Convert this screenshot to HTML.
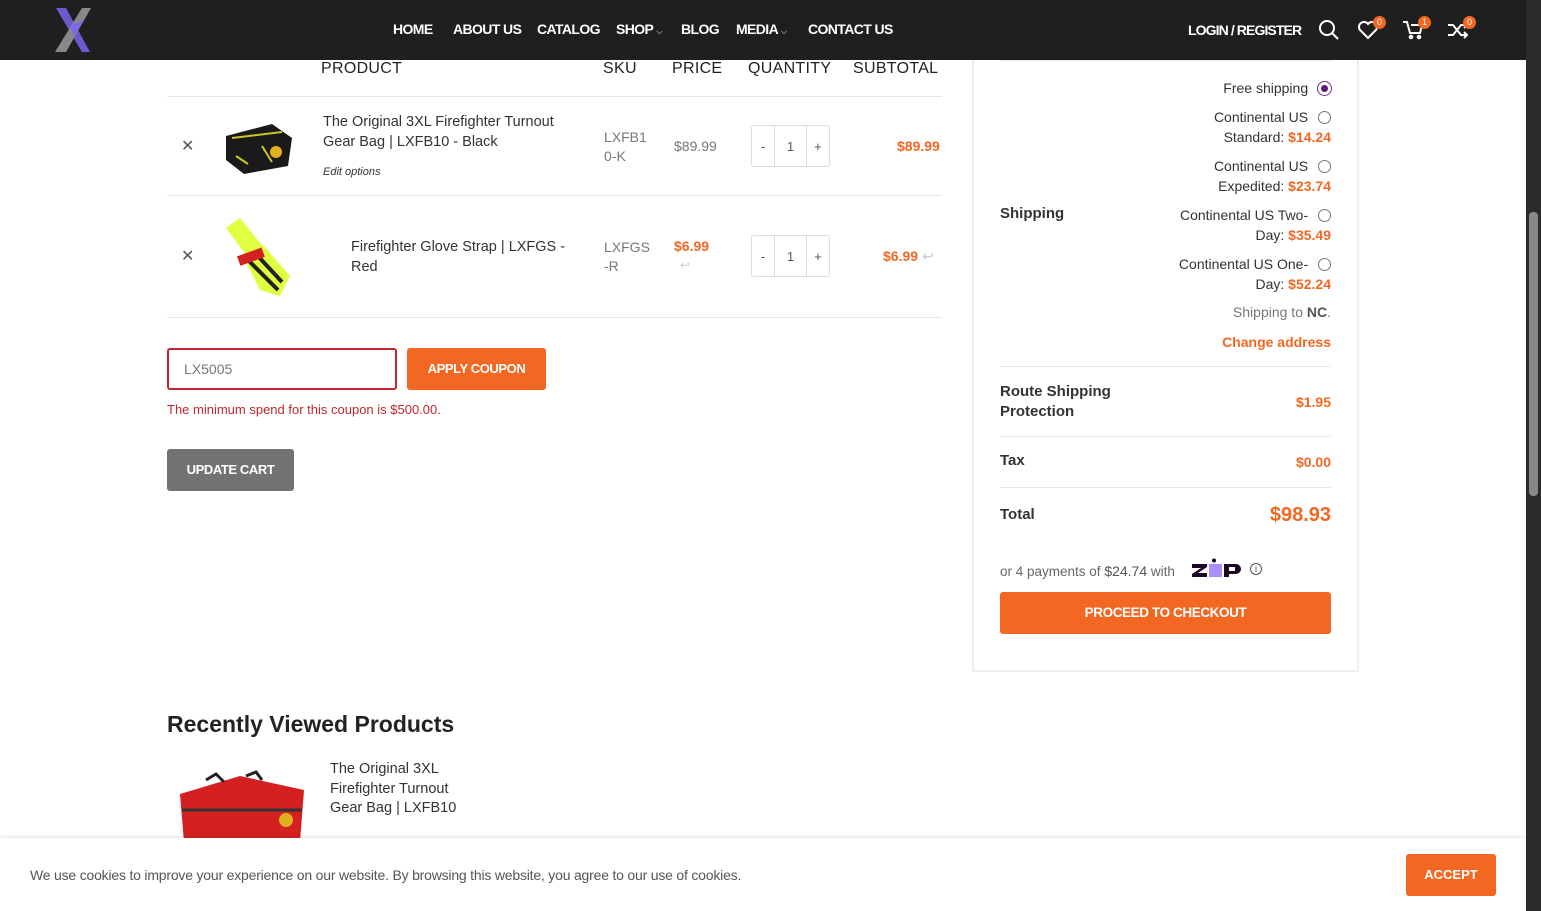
<!DOCTYPE html>
<html><head><meta charset="utf-8"><style>
*{box-sizing:border-box;margin:0;padding:0}
body{width:1541px;height:911px;overflow:hidden;background:#fff;font-family:"Liberation Sans",sans-serif;color:#333;position:relative}
.a{position:absolute}
.hdr{left:0;top:0;width:1526px;height:60px;background:#1f1f1f}
.nav{color:#fff;font-weight:bold;font-size:14px;top:21px;letter-spacing:-0.6px}
.or{color:#f26722}
.th{font-size:16px;color:#222;top:60px;letter-spacing:.3px}
.line{height:1px;background:#e6e6e6}
.t14{font-size:14px}
.qty{width:79px;height:42px;border:1px solid #ddd;border-radius:3px;display:flex;font-size:13px;color:#555}
.qty span{flex:1;display:flex;align-items:center;justify-content:center}
.qty span:nth-child(2){border-left:1px solid #ddd;border-right:1px solid #ddd;flex:1.4}
.r{text-align:right}
.radio{display:inline-block;width:13px;height:13px;border:1px solid #777;border-radius:50%;vertical-align:-2px;margin-left:6px}
.badge{width:13px;height:13px;border-radius:50%;background:#f26722;color:#fff;font-size:9px;text-align:center;line-height:13px}
</style></head><body>
<div class="a hdr"></div>
<svg class="a" style="left:52px;top:6px" width="42" height="48" viewBox="0 0 42 48"><path d="M4 2h10l24 44h-8z" fill="#6a5acd"/><path d="M30 2h9L14 46H3z" fill="#888"/><path d="M18 20l14-6-10 16z" fill="#7b68ee"/></svg>
<div class="a nav" style="left:393px">HOME</div>
<div class="a nav" style="left:453px">ABOUT US</div>
<div class="a nav" style="left:537px">CATALOG</div>
<div class="a nav" style="left:616px">SHOP <span style="font-size:8px;color:#999">⌵</span></div>
<div class="a nav" style="left:681px">BLOG</div>
<div class="a nav" style="left:736px">MEDIA <span style="font-size:8px;color:#999">⌵</span></div>
<div class="a nav" style="left:808px">CONTACT US</div>
<div class="a nav" style="left:1188px;top:22px;letter-spacing:-0.9px">LOGIN / REGISTER</div>
<svg class="a" style="left:1318px;top:19px" width="22" height="22" viewBox="0 0 22 22" fill="none" stroke="#fff" stroke-width="2"><circle cx="9" cy="9" r="7"/><path d="M14 14l6 6"/></svg>
<svg class="a" style="left:1357px;top:20px" width="22" height="20" viewBox="0 0 22 20" fill="none" stroke="#fff" stroke-width="2"><path d="M11 18L3 10a4.5 4.5 0 0 1 8-6a4.5 4.5 0 0 1 8 6z"/></svg>
<div class="a badge" style="left:1373px;top:16px">0</div>
<svg class="a" style="left:1402px;top:20px" width="22" height="20" viewBox="0 0 22 20" fill="none" stroke="#fff" stroke-width="2"><path d="M1 2h4l3 11h10l2-8H9"/><circle cx="9" cy="17" r="1.3"/><circle cx="17" cy="17" r="1.3"/></svg>
<div class="a badge" style="left:1418px;top:16px">1</div>
<svg class="a" style="left:1447px;top:21px" width="22" height="18" viewBox="0 0 22 18" fill="none" stroke="#fff" stroke-width="2"><path d="M1 4h5l8 10h6M1 14h5l8-10h6M17 1l3 3-3 3M17 11l3 3-3 3"/></svg>
<div class="a badge" style="left:1463px;top:16px">0</div>
<div class="a" style="left:1526px;top:0;width:15px;height:911px;background:#2b2b2b"></div>
<div class="a" style="left:1529px;top:212px;width:9px;height:284px;background:#888;border-radius:4px"></div>

<div class="a th" style="left:321px">PRODUCT</div>
<div class="a th" style="left:603px">SKU</div>
<div class="a th" style="left:672px">PRICE</div>
<div class="a th" style="left:748px">QUANTITY</div>
<div class="a th" style="left:853px">SUBTOTAL</div>
<div class="a line" style="left:167px;top:96px;width:775px"></div>
<div class="a" style="left:181px;top:136px;font-size:16px;color:#555">✕</div>
<svg class="a" style="left:222px;top:116px" width="74" height="60" viewBox="0 0 74 60"><path d="M4 20l46-12 20 14-4 28-44 8-18-14z" fill="#1a1a1a"/><path d="M10 22l50-6M14 40l12 8M40 30l10 16" stroke="#c8c820" stroke-width="2"/><circle cx="54" cy="36" r="6" fill="#e0b020"/></svg>
<div class="a t14" style="left:323px;top:112px;line-height:20px;color:#333;width:260px;font-size:14.5px">The Original 3XL Firefighter Turnout Gear Bag | LXFB10 - Black</div>
<div class="a" style="left:323px;top:166px;font-size:11px;font-style:italic">Edit options</div>
<div class="a t14" style="left:604px;top:128px;line-height:19px;color:#777">LXFB1<br>0-K</div>
<div class="a t14" style="left:674px;top:138px;color:#777">$89.99</div>
<div class="a qty" style="left:751px;top:125px"><span>-</span><span>1</span><span>+</span></div>
<div class="a t14 or" style="left:897px;top:138px;font-weight:bold">$89.99</div>
<div class="a line" style="left:167px;top:195px;width:775px"></div>
<div class="a" style="left:181px;top:246px;font-size:16px;color:#555">✕</div>
<svg class="a" style="left:222px;top:214px" width="74" height="84" viewBox="0 0 74 84"><path d="M4 14l14-10 24 30-14 12z" fill="#dfff40"/><path d="M20 40l22-8 26 30-10 20-20-6z" fill="#dfff40"/><path d="M26 46l30 30M34 40l26 28" stroke="#222" stroke-width="4"/><rect x="16" y="38" width="26" height="10" fill="#d42020" transform="rotate(-20 28 43)"/></svg>
<div class="a t14" style="left:351px;top:237px;line-height:20px;width:235px;font-size:14.5px">Firefighter Glove Strap | LXFGS - Red</div>
<div class="a t14" style="left:604px;top:238px;line-height:19px;color:#777">LXFGS<br>-R</div>
<div class="a t14 or" style="left:674px;top:238px;font-weight:bold">$6.99</div>
<div class="a" style="left:680px;top:258px;color:#ccc;font-size:12px">↩</div>
<div class="a qty" style="left:751px;top:235px"><span>-</span><span>1</span><span>+</span></div>
<div class="a t14 or" style="left:883px;top:248px;font-weight:bold">$6.99 <span style="color:#ccc;font-weight:normal">↩</span></div>
<div class="a line" style="left:167px;top:317px;width:775px"></div>
<div class="a" style="left:167px;top:348px;width:230px;height:42px;border:2px solid #c0262d;border-radius:3px;padding:11px 15px;font-size:14px;color:#777">LX5005</div>
<div class="a" style="left:407px;top:348px;width:139px;height:42px;background:#f26722;border-radius:3px;color:#fff;font-weight:bold;font-size:13px;text-align:center;line-height:42px;letter-spacing:-.4px">APPLY COUPON</div>
<div class="a" style="left:167px;top:402px;font-size:13px;color:#c0262d">The minimum spend for this coupon is $500.00.</div>
<div class="a" style="left:167px;top:449px;width:127px;height:42px;background:#727272;border-radius:3px;color:#fff;font-weight:bold;font-size:13px;text-align:center;line-height:42px;letter-spacing:-.4px">UPDATE CART</div>

<div class="a" style="left:972px;top:60px;width:387px;height:612px;border:2px solid #eee;border-top:none"></div>
<div class="a line" style="left:1000px;top:60px;width:331px"></div>
<div class="a t14 r" style="left:1100px;top:78px;width:231px;line-height:20px">Free shipping <span class="radio" style="border:3px solid #fff;box-shadow:0 0 0 1px #70308c;background:#5a1a7a"></span></div>
<div class="a t14 r" style="left:1100px;top:107px;width:231px;line-height:20px">Continental US <span class="radio"></span><br>Standard: <b class="or">$14.24</b></div>
<div class="a t14 r" style="left:1100px;top:156px;width:231px;line-height:20px">Continental US <span class="radio"></span><br>Expedited: <b class="or">$23.74</b></div>
<div class="a t14 r" style="left:1100px;top:205px;width:231px;line-height:20px">Continental US Two- <span class="radio"></span><br>Day: <b class="or">$35.49</b></div>
<div class="a t14 r" style="left:1100px;top:254px;width:231px;line-height:20px">Continental US One- <span class="radio"></span><br>Day: <b class="or">$52.24</b></div>
<div class="a t14 r" style="left:1100px;top:304px;width:231px;color:#777">Shipping to <b style="color:#555">NC</b>.</div>
<div class="a t14 r or" style="left:1100px;top:334px;width:231px;font-weight:bold">Change address</div>
<div class="a" style="left:1000px;top:205px;font-size:15px;font-weight:bold;color:#333">Shipping</div>
<div class="a line" style="left:1000px;top:366px;width:331px"></div>
<div class="a" style="left:1000px;top:382px;font-size:15px;font-weight:bold;line-height:20px">Route Shipping<br>Protection</div>
<div class="a t14 r or" style="left:1200px;top:394px;width:131px;font-weight:bold">$1.95</div>
<div class="a line" style="left:1000px;top:436px;width:331px"></div>
<div class="a" style="left:1000px;top:452px;font-size:15px;font-weight:bold">Tax</div>
<div class="a t14 r or" style="left:1200px;top:454px;width:131px;font-weight:bold">$0.00</div>
<div class="a line" style="left:1000px;top:487px;width:331px"></div>
<div class="a" style="left:1000px;top:506px;font-size:15px;font-weight:bold">Total</div>
<div class="a r or" style="left:1200px;top:504px;width:131px;font-weight:bold;font-size:20px">$98.93</div>
<div class="a" style="left:1000px;top:563px;font-size:13.5px;color:#666">or 4 payments of <span style="color:#555;font-size:14px">$24.74</span> with</div>
<svg class="a" style="left:1191px;top:558px" width="52" height="20" viewBox="0 0 52 20"><path d="M1 6h15v3l-9 6h9v4H1v-3l9-6H1z" fill="#1a0826"/><rect x="18" y="6" width="13" height="13" fill="#aa8fff"/><circle cx="23" cy="2.5" r="2" fill="#1a0826"/><path d="M33 6h12a5 5 0 0 1 0 10h-7v3h-5z" fill="#1a0826"/><rect x="38" y="9" width="6" height="4" fill="#fff"/></svg>
<div class="a" style="left:1250px;top:563px;width:12px;height:12px;border:1px solid #555;border-radius:50%;font-size:9px;text-align:center;line-height:11px">i</div>
<div class="a" style="left:1000px;top:592px;width:331px;height:42px;background:#f26722;border-radius:3px;color:#fff;font-weight:bold;font-size:13.5px;text-align:center;line-height:42px;letter-spacing:-.4px">PROCEED TO CHECKOUT</div>

<div class="a" style="left:167px;top:711px;font-size:23px;font-weight:bold;color:#222">Recently Viewed Products</div>
<svg class="a" style="left:176px;top:770px" width="132" height="72" viewBox="0 0 132 72"><path d="M4 24l60-18 64 14-4 52H8z" fill="#d42020"/><path d="M30 10l10-6 8 8M70 6l10-4 6 8" stroke="#222" stroke-width="3" fill="none"/><path d="M6 40h120" stroke="#333" stroke-width="3"/><circle cx="110" cy="50" r="7" fill="#e0b020"/></svg>
<div class="a" style="left:330px;top:760px;font-size:14.5px;line-height:19.5px;width:135px">The Original 3XL Firefighter Turnout Gear Bag | LXFB10</div>

<div class="a" style="left:0;top:838px;width:1526px;height:73px;background:#fff;box-shadow:0 -1px 4px rgba(0,0,0,.12)"></div>
<div class="a" style="left:30px;top:867px;font-size:14px;color:#555;letter-spacing:-.2px">We use cookies to improve your experience on our website. By browsing this website, you agree to our use of cookies.</div>
<div class="a" style="left:1406px;top:854px;width:90px;height:42px;background:#f26722;border-radius:3px;color:#fff;font-weight:bold;font-size:13px;text-align:center;line-height:42px">ACCEPT</div>
</body></html>
